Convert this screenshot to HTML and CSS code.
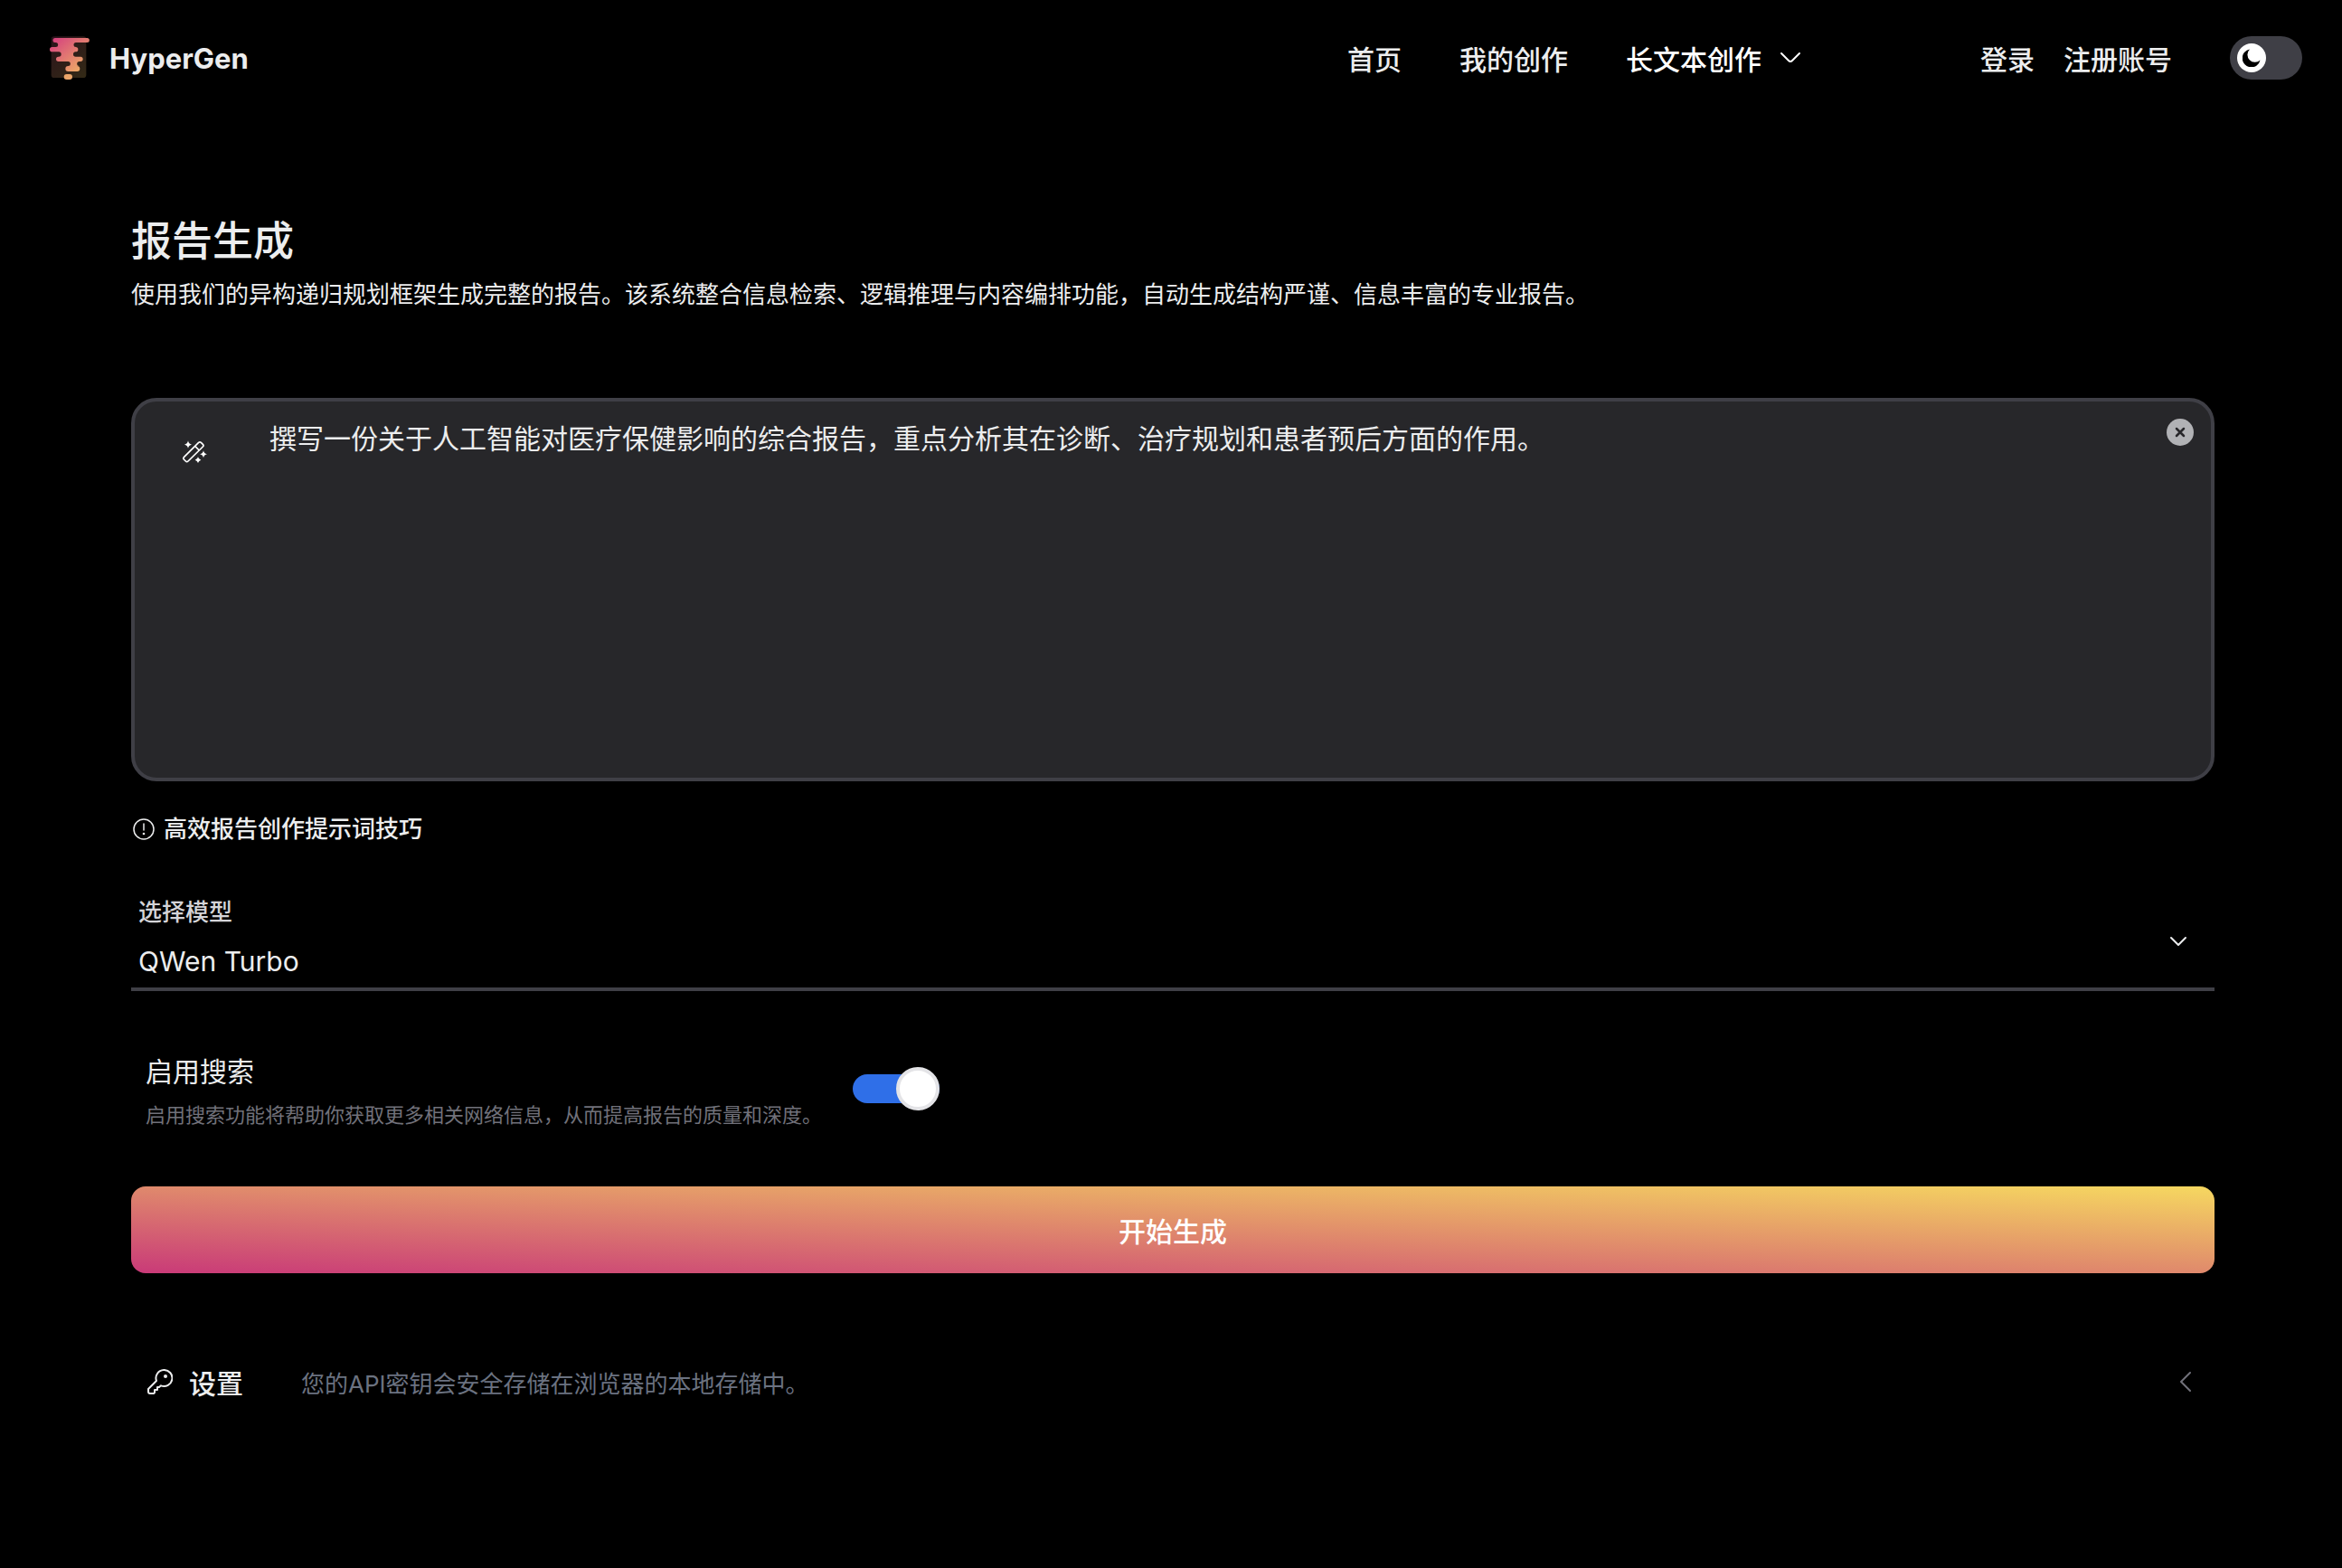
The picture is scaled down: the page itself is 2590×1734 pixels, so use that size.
FILE: index.html
```html
<!DOCTYPE html>
<html lang="zh-CN">
<head>
<meta charset="utf-8">
<meta name="viewport" content="width=device-width, initial-scale=1">
<title>HyperGen</title>
<link rel="stylesheet" href="styles.css">
</head>
<body>
<header class="header">
  <a class="brand" href="#">
    <svg class="brand-logo" viewBox="75 60 132 150" aria-hidden="true">
      <defs>
        <linearGradient id="logo" gradientUnits="userSpaceOnUse" x1="85" y1="75" x2="185" y2="195">
          <stop offset="0" stop-color="#d6437e"/>
          <stop offset="1" stop-color="#f0b963"/>
        </linearGradient>
        <linearGradient id="tile" gradientUnits="userSpaceOnUse" x1="80" y1="64" x2="196" y2="201">
          <stop offset="0" stop-color="#2b121b"/>
          <stop offset="1" stop-color="#332a16"/>
        </linearGradient>
      </defs>
      <rect x="80" y="64" width="116" height="137" rx="10" fill="url(#tile)"/>
      <path fill="url(#logo)" d="M93 69H199a7.5 7.5 0 0 1 0 15H162a7.5 7.5 0 0 0 0 15H161a8 8 0 0 1 0 16a8 8 0 0 0 0 16H177a8 8 0 0 1 0 16H173a7.5 7.5 0 0 0 0 15H166a9 9 0 0 1 0 18H136a9 9 0 0 1 0-18a7.5 7.5 0 0 0 0-15H104a8 8 0 0 1 0-16H105a8 8 0 0 0 0-16H83a8 8 0 0 1 0-16H95a7.5 7.5 0 0 0 0-15H93a7.5 7.5 0 0 1 0-15z"/>
      <rect x="122" y="189" width="28" height="18" rx="9" fill="#eba569"/>
    </svg>
    <span>HyperGen</span>
  </a>
  <nav class="nav">
    <a href="#">首页</a>
    <a href="#">我的创作</a>
    <button class="nav-menu" type="button">长文本创作
      <svg width="24" height="14" viewBox="0 0 24 14" aria-hidden="true"><path d="M2 2l8 8q2 2 4 0l8-8" fill="none" stroke="currentColor" stroke-width="2" stroke-linecap="round"/></svg>
    </button>
  </nav>
  <div class="account">
    <a href="#">登录</a>
    <a href="#">注册账号</a>
  </div>
  <label class="theme">
    <input type="checkbox" aria-label="深色模式">
    <span class="theme-thumb"><svg width="20" height="20" viewBox="0 0 20 20" aria-hidden="true"><path d="M8 0.5A8 8 0 0 0 19.500 12.500A10 10 0 1 1 8 .5z" fill="#000"/></svg></span>
  </label>
</header>

<main class="main">
  <h1 class="title">报告生成</h1>
  <p class="lead">使用我们的异构递归规划框架生成完整的报告。该系统整合信息检索、逻辑推理与内容编排功能，自动生成结构严谨、信息丰富的专业报告。</p>

  <form class="form">
    <div class="prompt">
      <svg class="prompt-icon" width="27" height="25" viewBox="213 202 81 75" aria-hidden="true">
        <g fill="none" stroke="#fff" stroke-width="5" stroke-linejoin="round">
          <path d="M217 258L266 209q4-3 8 0l6 6q4 4 0 8L231 271q-4 4-8 0l-6-6q-3-3 0-7z"/>
          <path d="M254 221l14 14"/>
        </g>
        <path fill="#fff" d="M231 203q2 11 12 13q-10 2-12 12q-2-10-12-12q10-2 12-13zM282 236q2 10 12 12q-10 2-12 12q-2-10-12-12q10-2 12-12zM264 257q2 8 10 10q-8 2-10 10q-2-8-10-10q8-2 10-10z"/>
      </svg>
      <textarea class="prompt-input" aria-label="报告提示词">撰写一份关于人工智能对医疗保健影响的综合报告，重点分析其在诊断、治疗规划和患者预后方面的作用。</textarea>
      <button class="prompt-clear" type="button" aria-label="清除">
        <svg width="30" height="30" viewBox="0 0 30 30" aria-hidden="true"><circle cx="15" cy="15" r="15" fill="#b1b2b5"/><path d="M11 11l8 8M19 11l-8 8" stroke="#27272a" stroke-width="2.500" stroke-linecap="round"/></svg>
      </button>
    </div>

    <button class="tips" type="button">
      <svg width="24" height="24" viewBox="0 0 24 24" aria-hidden="true"><circle cx="12" cy="12" r="11" fill="none" stroke="currentColor" stroke-width="1.500"/><path d="M12 6v7" stroke="currentColor" stroke-width="1.500" stroke-linecap="round"/><circle cx="12" cy="17" r="1.300" fill="currentColor"/></svg>
      高效报告创作提示词技巧
    </button>

    <div class="field">
      <label for="model">选择模型</label>
      <select id="model"><option>QWen Turbo</option></select>
      <svg class="field-arrow" width="20" height="12" viewBox="0 0 20 12" aria-hidden="true"><path d="M2 2l8 8 8-8" fill="none" stroke="currentColor" stroke-width="2" stroke-linecap="round" stroke-linejoin="round"/></svg>
    </div>

    <div class="search">
      <label for="search">
        <span class="search-title">启用搜索</span>
        <span class="search-note">启用搜索功能将帮助你获取更多相关网络信息，从而提高报告的质量和深度。</span>
      </label>
      <input class="switch" id="search" type="checkbox" role="switch" checked>
    </div>

    <button class="submit" type="button">开始生成</button>
  </form>

  <button class="settings" type="button">
    <svg width="28" height="28" viewBox="0 0 28 28" aria-hidden="true"><path d="M18 1a9 9 0 1 1-3 17.300L13 20h-2v3H8v3l-1 1H3q-2 0-2-2v-3L10 13A9 9 0 0 1 18 1z" fill="none" stroke="currentColor" stroke-width="2" stroke-linejoin="round"/><circle cx="20" cy="8" r="2" fill="currentColor"/></svg>
    <span class="settings-title">设置</span>
    <span class="settings-note">您的API密钥会安全存储在浏览器的本地存储中。</span>
    <svg class="settings-arrow" width="12" height="22" viewBox="0 0 12 22" aria-hidden="true"><path d="M11 1L1 11l10 10" fill="none" stroke="currentColor" stroke-width="2" stroke-linecap="round" stroke-linejoin="round"/></svg>
  </button>
</main>
</body>
</html>
```
FILE: styles.css
```css
*,
*::before {
  box-sizing: border-box;
}

body {
  margin: 0;
  padding-left: 4px;
  min-height: 100vh;
  background: #000;
  color: #ecedee;
  font-family: Inter, "Noto Sans CJK SC", sans-serif;
  font-size: 26px;
}

a {
  color: inherit;
  text-decoration: none;
}

button,
select,
textarea {
  margin: 0;
  padding: 0;
  border: 0;
  background: none;
  color: inherit;
  font: inherit;
  text-align: left;
}

svg {
  display: block;
  flex: none;
}

.header {
  display: flex;
  align-items: center;
  height: 128px;
  padding: 0 44px 0 51px;
  font-size: 30px;
  font-weight: 500;
}

.brand {
  display: flex;
  align-items: center;
  gap: 22px;
  margin-right: auto;
  font-size: 31px;
  font-weight: 700;
}

.brand-logo {
  width: 44px;
  height: 50px;
}

.nav {
  display: flex;
  align-items: center;
  gap: 64px;
  margin-right: 198px;
}

.nav-menu {
  display: flex;
  align-items: center;
  gap: 20px;
  color: #fff;
}

.account {
  display: flex;
  gap: 32px;
  margin-right: 64px;
}

.theme {
  display: flex;
  align-items: center;
  width: 80px;
  height: 48px;
  padding: 0 8px;
  border-radius: 24px;
  background: #3f3f46;
}

.theme input {
  appearance: none;
  width: 0;
  margin: 0;
}

.theme-thumb {
  display: flex;
  align-items: center;
  justify-content: center;
  width: 32px;
  height: 32px;
  border-radius: 50%;
  background: #fff;
}

.main {
  max-width: 2304px;
  margin: 0 auto;
  padding: 107px 0 160px;
}

.title {
  margin: 0;
  font-size: 45px;
  line-height: 64px;
  font-weight: 500;
}

.lead {
  margin: 0;
  line-height: 54px;
}

.form {
  display: flex;
  flex-direction: column;
  margin-top: 87px;
}

.prompt {
  display: flex;
  align-items: flex-start;
  height: 424px;
  padding: 19px;
  border: 4px solid #3f3f46;
  border-radius: 28px;
  background: #27272a;
}

.prompt-icon {
  margin: 24px 69px 0 34px;
}

.prompt-input {
  flex: 1;
  align-self: stretch;
  resize: none;
  outline: none;
  font-size: 30px;
  line-height: 44px;
}

.tips {
  display: flex;
  align-items: center;
  align-self: flex-start;
  gap: 10px;
  margin-top: 33px;
  padding-left: 2px;
  line-height: 40px;
  font-weight: 500;
}

.field {
  position: relative;
  display: flex;
  flex-direction: column;
  margin-top: 48px;
  border-bottom: 4px solid #3f3f46;
}

.field label {
  padding-left: 8px;
  color: #d4d4d8;
  line-height: 48px;
  font-weight: 500;
}

.field select {
  appearance: none;
  height: 59px;
  padding-left: 8px;
  font-size: 30px;
}

.field-arrow {
  position: absolute;
  top: 50px;
  right: 30px;
  pointer-events: none;
}

.search {
  display: flex;
  align-items: flex-start;
  gap: 34px;
  margin-top: 65px;
  padding-left: 16px;
}

.search-title,
.search-note {
  display: block;
}

.search-title {
  font-size: 30px;
  line-height: 48px;
}

.search-note {
  color: #71717a;
  font-size: 22px;
  line-height: 48px;
}

.switch {
  appearance: none;
  display: flex;
  align-items: center;
  width: 96px;
  height: 32px;
  margin: 27px 0 0;
  border-radius: 16px;
  background: #2f6fe8;
}

.switch::before {
  content: "";
  width: 48px;
  height: 48px;
  margin-left: auto;
  flex: none;
  border: 4px solid #e4e4e7;
  border-radius: 50%;
  background: #fff;
}

.submit {
  height: 96px;
  margin-top: 55px;
  border-radius: 16px;
  background: linear-gradient(to top right, #c93a78, #f6d860);
  color: #fff;
  font-size: 30px;
  font-weight: 500;
  text-align: center;
}

.settings {
  display: flex;
  align-items: center;
  width: 100%;
  height: 64px;
  margin-top: 88px;
  padding: 0 26px 0 18px;
}

.settings-title {
  margin: 0 64px 0 18px;
  font-size: 30px;
  font-weight: 500;
}

.settings-note {
  color: #6b7280;
}

.settings-arrow {
  margin-left: auto;
  color: #71717a;
}
```
